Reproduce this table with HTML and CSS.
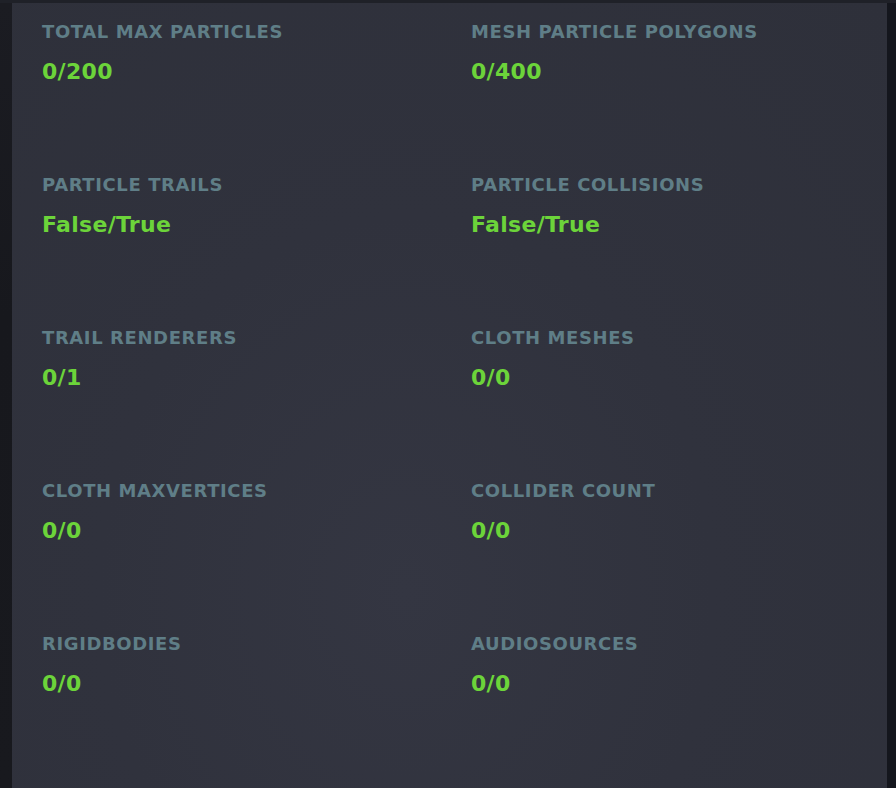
FILE: index.html
```html
<!DOCTYPE html>
<html>
<head>
<meta charset="utf-8">
<link rel="stylesheet" href="styles.css">
</head>
<body>
<div class="screen">
  <div class="left-strip"></div>
  <div class="panel">
    <div class="grid">
      <div class="stat"><div class="label">TOTAL MAX PARTICLES</div><div class="value">0/200</div></div>
      <div class="stat"><div class="label">MESH PARTICLE POLYGONS</div><div class="value">0/400</div></div>
      <div class="stat"><div class="label">PARTICLE TRAILS</div><div class="value">False/True</div></div>
      <div class="stat"><div class="label">PARTICLE COLLISIONS</div><div class="value">False/True</div></div>
      <div class="stat"><div class="label">TRAIL RENDERERS</div><div class="value">0/1</div></div>
      <div class="stat"><div class="label">CLOTH MESHES</div><div class="value">0/0</div></div>
      <div class="stat"><div class="label">CLOTH MAXVERTICES</div><div class="value">0/0</div></div>
      <div class="stat"><div class="label">COLLIDER COUNT</div><div class="value">0/0</div></div>
      <div class="stat"><div class="label">RIGIDBODIES</div><div class="value">0/0</div></div>
      <div class="stat"><div class="label">AUDIOSOURCES</div><div class="value">0/0</div></div>
    </div>
  </div>
  <div class="right-strip"></div>
</div>
</body>
</html>
```
FILE: styles.css
```css
html, body {
  margin: 0;
  padding: 0;
  background: #1f2128;
  width: 896px;
  height: 788px;
  overflow: hidden;
}
.screen {
  display: flex;
  height: 785px;
  margin-top: 3px;
}
.left-strip {
  width: 12px;
  background: linear-gradient(180deg, #1b1c22 0%, #17181d 40%, #18191e 100%);
}
.right-strip {
  width: 9px;
  background: #14161d;
}
.panel {
  flex: 1;
  background: radial-gradient(ellipse at 45% 75%, #343642 0%, #30323d 45%, #2e303a 100%);
  padding: 17px 0 0 30px;
  font-family: "DejaVu Sans", Verdana, sans-serif;
}
.grid {
  display: grid;
  grid-template-columns: 429px 1fr;
  grid-auto-rows: 153px;
}
.label {
  color: #5f7e87;
  font-weight: bold;
  font-size: 18px;
  line-height: 24px;
  letter-spacing: 0.6px;
}
.value {
  color: #6cd43a;
  font-weight: bold;
  font-size: 22px;
  line-height: 28px;
  margin-top: 14px;
  letter-spacing: 0.3px;
}
```
